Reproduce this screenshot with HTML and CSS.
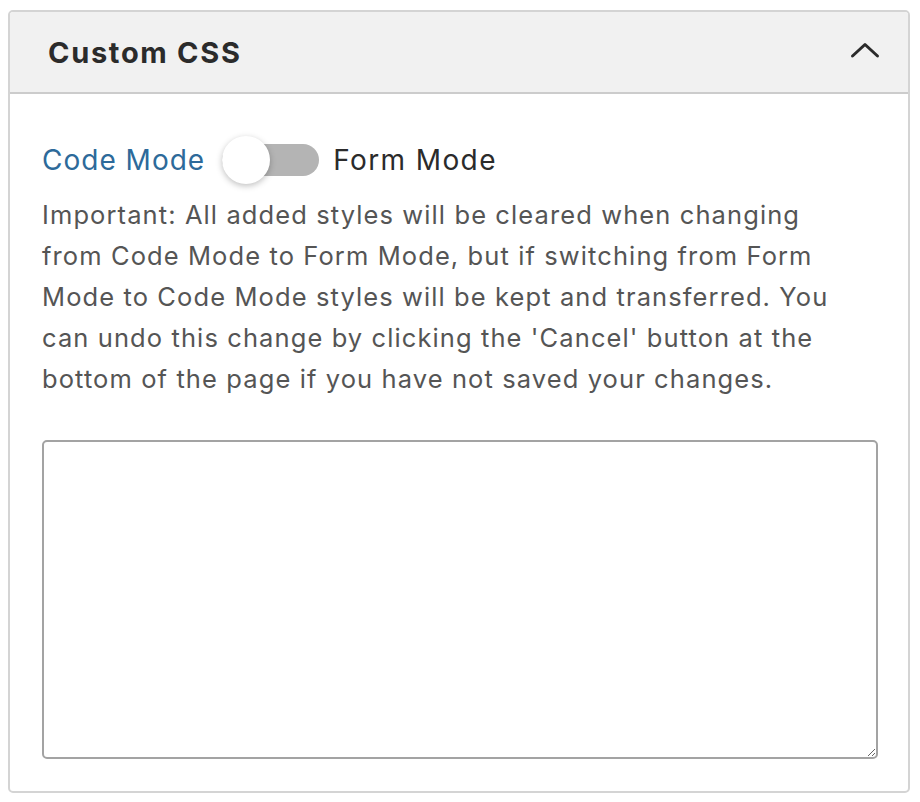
FILE: index.html
```html
<!DOCTYPE html>
<html>
<head>
<meta charset="utf-8">
<link rel="stylesheet" href="styles.css">
</head>
<body>
<div class="panel">
  <div class="panel-header">
    <h2 class="panel-title">Custom CSS</h2>
    <svg class="chevron" width="30" height="18" viewBox="0 0 30 18"><path d="M2.5 15 L15 3.5 L27.5 15" fill="none" stroke="#2b2b2b" stroke-width="3" stroke-linecap="round" stroke-linejoin="round"/></svg>
  </div>
  <div class="panel-body">
    <div class="mode-row">
      <span class="mode-active">Code Mode</span>
      <span class="switch"><span class="track"></span><span class="knob"></span></span>
      <span class="mode-inactive">Form Mode</span>
    </div>
    <p class="note">Important: All added styles will be cleared when changing<br>from Code Mode to Form Mode, but if switching from Form<br>Mode to Code Mode styles will be kept and transferred. You<br>can undo this change by clicking the 'Cancel' button at the<br>bottom of the page if you have not saved your changes.</p>
    <textarea class="css-input"></textarea>
  </div>
</div>
</body>
</html>
```
FILE: styles.css
```css
html, body {
  margin: 0;
  padding: 0;
  background: #fff;
}
body {
  padding: 10px 10px 0 8px;
  font-family: "Inter", "Noto Sans", sans-serif;
}
.panel {
  border: 2px solid #d4d4d4;
  border-radius: 5px;
  height: 783px;
  box-sizing: border-box;
  overflow: hidden;
}
.panel-header {
  height: 80px;
  background: #f1f1f1;
  border-bottom: 2px solid #cccccc;
  display: flex;
  align-items: center;
  justify-content: space-between;
  padding: 0 28px 0 38px;
}
.panel-title {
  margin: 0;
  font-size: 29px;
  font-weight: 700;
  color: #2b2b2b;
  letter-spacing: 1.7px;
}
.chevron {
  display: block;
  margin-top: -4px;
}
.panel-body {
  padding: 42px 32px 0 32px;
}
.mode-row {
  display: flex;
  align-items: center;
  height: 48px;
}
.mode-active {
  font-size: 28px;
  letter-spacing: 1px;
  color: #2d6a9a;
}
.mode-inactive {
  font-size: 28px;
  letter-spacing: 1.4px;
  color: #2b2b2b;
}
.switch {
  position: relative;
  width: 97px;
  height: 48px;
  margin: 0 14px 0 17px;
  display: flex;
  align-items: center;
}
.track {
  width: 97px;
  height: 32px;
  border-radius: 16px;
  background: #b4b4b4;
}
.knob {
  position: absolute;
  left: 0;
  top: 0;
  width: 48px;
  height: 48px;
  border-radius: 50%;
  background: #fff;
  box-shadow: 0 2px 6px rgba(0,0,0,0.25);
}
.note {
  margin: 10px 0 0 0;
  font-size: 25.5px;
  letter-spacing: 1.1px;
  line-height: 41px;
  color: #555555;
  white-space: nowrap;
}
.css-input {
  display: block;
  margin-top: 41px;
  width: 836px;
  height: 319px;
  box-sizing: border-box;
  border: 2px solid #a3a3a3;
  border-radius: 5px;
  resize: both;
  font-size: 16px;
}
```
